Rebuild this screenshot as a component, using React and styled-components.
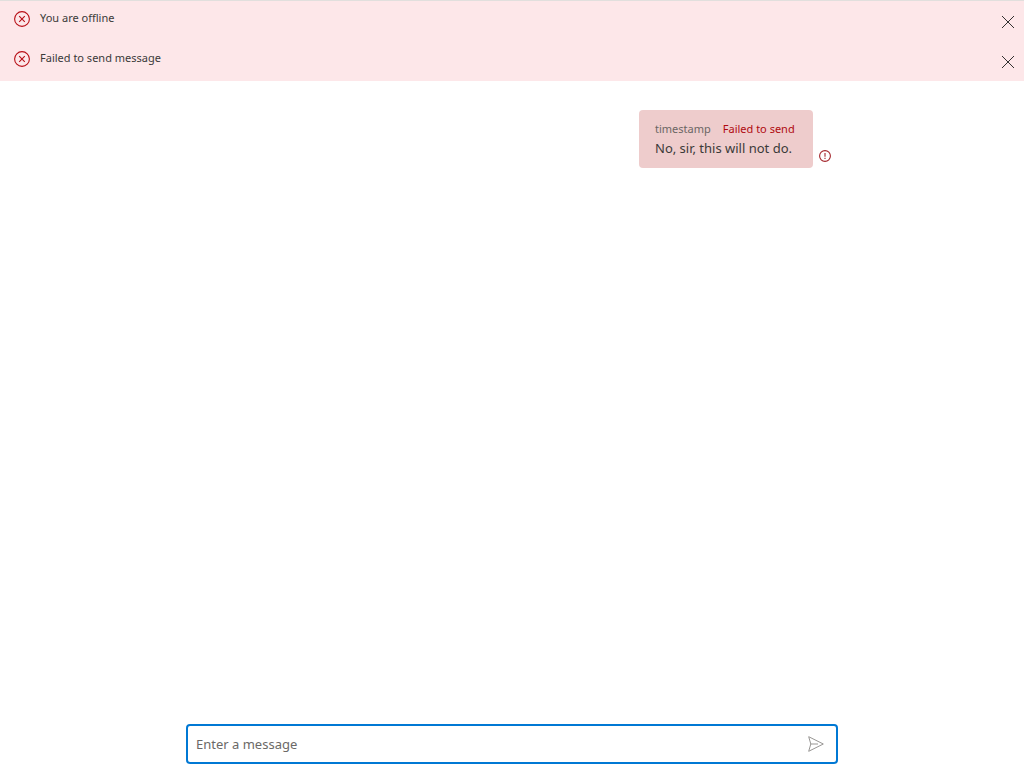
import React from "react";
import styled, { createGlobalStyle } from "styled-components";

const GlobalStyle = createGlobalStyle`
  * {
    box-sizing: border-box;
  }
  body {
    margin: 0;
    background: #ffffff;
    color: #3b3a39;
    font-family: "Segoe UI", "Noto Sans", sans-serif;
  }
`;

const Page = styled.div`
  display: flex;
  flex-direction: column;
  min-height: 100vh;
`;

const ErrorStack = styled.div`
  border-top: 1px solid #e1dfdd;
`;

const ErrorBar = styled.div`
  display: flex;
  align-items: flex-start;
  height: 40px;
  padding: 0 0 0 14px;
  background: #fde7e9;
`;

const BarIcon = styled.svg`
  flex: none;
  width: 16px;
  height: 16px;
  margin: 10px 10px 0 0;
`;

const BarText = styled.span`
  flex: 1;
  padding-top: 9px;
  font-size: 11px;
  line-height: 16px;
`;

const DismissButton = styled.button`
  display: flex;
  align-items: center;
  justify-content: center;
  width: 32px;
  height: 32px;
  margin-top: 5px;
  padding: 0;
  border: 0;
  background: transparent;
  color: #323130;
  cursor: pointer;
`;

const Thread = styled.main`
  flex: 1;
  width: 100%;
  max-width: 652px;
  margin: 0 auto;
  padding: 29px 7px 0;
`;

const MessageRow = styled.div`
  display: flex;
  justify-content: flex-end;
  align-items: flex-end;
  gap: 6px;
`;

const Bubble = styled.div`
  min-width: 174px;
  padding: 11px 16px 9px;
  border-radius: 4px;
  background: #eecccc;
`;

const MessageMeta = styled.div`
  display: flex;
  gap: 12px;
  font-size: 11px;
  line-height: 16px;
  color: #6b6664;
`;

const FailedLabel = styled.span`
  color: #b00a10;
`;

const MessageText = styled.div`
  font-size: 13px;
  line-height: 22px;
`;

const StatusIcon = styled.svg`
  width: 12px;
  height: 12px;
  margin-bottom: 6px;
`;

const Composer = styled.form`
  display: flex;
  align-items: center;
  width: 100%;
  max-width: 652px;
  height: 40px;
  margin: 0 auto 4px;
  padding: 0 4px 0 8px;
  border: 2px solid #0078d4;
  border-radius: 4px;
`;

const MessageInput = styled.input`
  flex: 1;
  min-width: 0;
  height: 32px;
  padding: 0;
  border: 0;
  outline: 0;
  background: transparent;
  color: #323130;
  font: 13px/20px "Segoe UI", "Noto Sans", sans-serif;

  &::placeholder {
    color: #6b6967;
    opacity: 1;
  }
`;

const SendButton = styled.button`
  display: flex;
  align-items: center;
  justify-content: center;
  width: 32px;
  height: 32px;
  padding: 0;
  border: 0;
  background: transparent;
  color: #979593;
  cursor: pointer;
`;

function ErrorMessage({ children }) {
  return (
    <ErrorBar role="alert">
      <BarIcon viewBox="0 0 16 16" fill="none" stroke="#b80f16" aria-hidden="true">
        <circle cx="8" cy="8" r="7.4" strokeWidth="1.1" />
        <path d="M5.2 5.2l5.6 5.6M10.8 5.2l-5.6 5.6" strokeWidth="1.1" />
      </BarIcon>
      <BarText>{children}</BarText>
      <DismissButton type="button" aria-label="Dismiss">
        <svg width="12" height="12" viewBox="0 0 12 12" fill="none" stroke="currentColor" aria-hidden="true">
          <path d="M0 0l12 12M12 0L0 12" strokeWidth="1" />
        </svg>
      </DismissButton>
    </ErrorBar>
  );
}

export default function App() {
  return (
    <>
      <GlobalStyle />
      <Page>
        <ErrorStack>
          <ErrorMessage>You are offline</ErrorMessage>
          <ErrorMessage>Failed to send message</ErrorMessage>
        </ErrorStack>
        <Thread>
          <MessageRow>
            <Bubble>
              <MessageMeta>
                <span>timestamp</span>
                <FailedLabel>Failed to send</FailedLabel>
              </MessageMeta>
              <MessageText>No, sir, this will not do.</MessageText>
            </Bubble>
            <StatusIcon viewBox="0 0 12 12" fill="none" stroke="#a4262c" role="img" aria-label="Failed to send">
              <circle cx="6" cy="6" r="5.4" strokeWidth="1.1" />
              <path d="M6 3v3.8M6 7.8v1.2" strokeWidth="1.1" />
            </StatusIcon>
          </MessageRow>
        </Thread>
        <Composer onSubmit={(event) => event.preventDefault()}>
          <MessageInput type="text" placeholder="Enter a message" aria-label="Enter a message" />
          <SendButton type="submit" aria-label="Send message">
            <svg width="16" height="16" viewBox="0 0 16 16" fill="none" stroke="currentColor" aria-hidden="true">
              <path d="M0.7 0.7L15.3 8L0.7 15.3L2.8 8ZM2.8 8H10" strokeWidth="1" />
            </svg>
          </SendButton>
        </Composer>
      </Page>
    </>
  );
}
